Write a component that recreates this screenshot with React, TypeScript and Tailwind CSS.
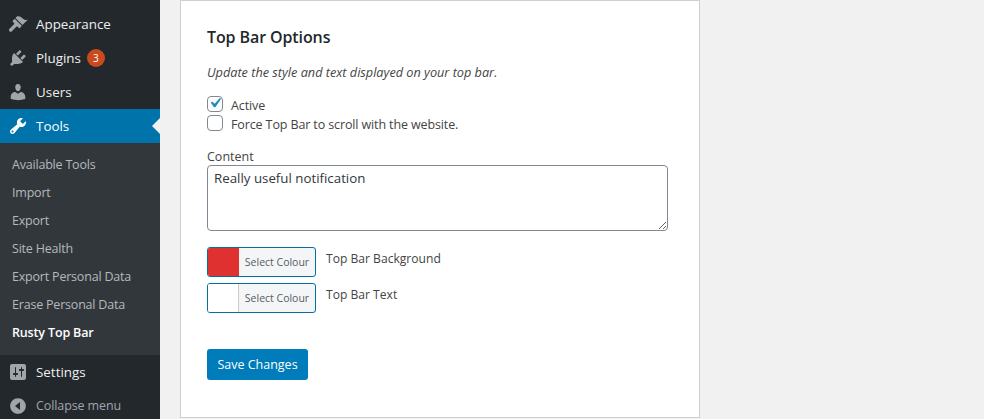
const icons: Record<string, string> = {
  appearance:
    "M14.48 11.06L7.41 3.99l1.5-1.5c.5-.56 2.3-.47 3.51.32 1.21.8 1.43 1.28 2.91 2.1 1.18.64 2.45 1.26 4.45.85zm-.71.71L6.7 4.7 4.93 6.47c-.39.39-.39 1.02 0 1.41l1.06 1.06c.39.39.39 1.03 0 1.42L1.5 14.8c-.7.7-.7 1.7 0 2.4s1.7.7 2.4 0l4.4-4.4c.39-.39 1.03-.39 1.42 0l1.06 1.06c.39.39 1.02.39 1.41 0z",
  plugins:
    "M13.11 4.36L9.87 7.6 8 5.73l3.24-3.24c.35-.34 1.05-.2 1.56.32.52.51.66 1.21.31 1.55zm-8 1.77l.91-1.12 9.01 9.01-1.19.84c-.71.71-2.63 1.16-3.82 1.16H6.14L4.9 17.26c-.59.59-1.54.59-2.12 0-.59-.58-.59-1.53 0-2.12l1.24-1.24v-3.88c0-1.13.4-3.19 1.09-3.89zm7.26 3.97l3.24-3.24c.34-.35 1.04-.21 1.55.31.52.51.66 1.21.31 1.55l-3.24 3.25z",
  users:
    "M10 9.25c-2.27 0-2.73-3.44-2.73-3.44C7 4.02 7.82 2 9.97 2c2.16 0 2.98 2.02 2.71 3.81 0 0-.41 3.44-2.68 3.44zm0 2.57L12.72 10c2.39 0 4.52 2.33 4.52 4.53v2.49s-3.65 1.13-7.24 1.13c-3.65 0-7.24-1.13-7.24-1.13v-2.49c0-2.25 1.94-4.48 4.47-4.48z",
  tools:
    "M16.68 9.77c-1.34 1.34-3.3 1.67-4.95.99l-5.41 6.52c-.99.99-2.59.99-3.58 0s-.99-2.59 0-3.57l6.52-5.42c-.68-1.65-.35-3.61.99-4.95 1.28-1.28 3.12-1.62 4.72-1.06l-2.89 2.89 2.82 2.82 2.86-2.87c.53 1.58.18 3.39-1.08 4.65zM3.81 16.21c.4.39 1.04.39 1.43 0 .4-.4.4-1.04 0-1.43-.39-.4-1.03-.4-1.43 0-.39.39-.39 1.03 0 1.43z",
  settings:
    "M18 16V4c0-1.1-.9-2-2-2H4c-1.1 0-2 .9-2 2v12c0 1.1.9 2 2 2h12c1.1 0 2-.9 2-2zM8 11h1c.55 0 1 .45 1 1s-.45 1-1 1H8v1.5c0 .28-.22.5-.5.5s-.5-.22-.5-.5V13H6c-.55 0-1-.45-1-1s.45-1 1-1h1V5.5c0-.28.22-.5.5-.5s.5.22.5.5V11zm5-2h-1c-.55 0-1-.45-1-1s.45-1 1-1h1V5.5c0-.28.22-.5.5-.5s.5.22.5.5V7h1c.55 0 1 .45 1 1s-.45 1-1 1h-1v5.5c0 .28-.22.5-.5.5s-.5-.22-.5-.5V9z",
  collapse:
    "M10 2.16c4.33 0 7.84 3.51 7.84 7.84s-3.51 7.84-7.84 7.84S2.16 14.33 2.16 10 5.71 2.16 10 2.16zm2 11.84V6l-5 4z",
};

const submenu = [
  "Available Tools",
  "Import",
  "Export",
  "Site Health",
  "Export Personal Data",
  "Erase Personal Data",
];

function MenuIcon({ name, className }: { name: string; className: string }) {
  return (
    <svg viewBox="0 0 20 20" className={`w-5 h-5 fill-current ${className}`}>
      <path d={icons[name]} />
    </svg>
  );
}

function MenuItem({ icon, label, children }: { icon: string; label: string; children?: React.ReactNode }) {
  return (
    <div className="h-[34px] flex items-center pl-2 text-[13.4px] leading-[32px] pb-px text-[#eeeeee]">
      <MenuIcon name={icon} className="text-[#a0a5aa] mr-2" />
      <span>{label}</span>
      {children}
    </div>
  );
}

function ColourRow({ swatch, divider, label }: { swatch: string; divider: string; label: string }) {
  return (
    <div className="flex items-start">
      <div className="w-[109px] h-[30px] flex border border-[#0071a1] rounded-[3px] overflow-hidden bg-[#f3f5f6]">
        <div className={`w-[31px] h-full border-r ${swatch} ${divider}`} />
        <div className="flex-1 text-center text-[10.5px] leading-[28px] text-[#555d66]">Select Colour</div>
      </div>
      <span className="ml-[10px] text-[12.1px] leading-[24px] text-[#444444]">{label}</span>
    </div>
  );
}

export default function App() {
  return (
    <div className="w-[984px] h-[419px] overflow-hidden flex bg-[#f1f1f1] font-['Open_Sans','Liberation_Sans',sans-serif]">
      <aside className="w-40 h-full shrink-0 bg-[#23282d] pt-[7px]">
        <MenuItem icon="appearance" label="Appearance" />
        <MenuItem icon="plugins" label="Plugins">
          <span className="ml-[6px] w-[18px] h-[18px] rounded-full bg-[#ca4a1f] text-white text-[10px] leading-[18px] text-center">3</span>
        </MenuItem>
        <MenuItem icon="users" label="Users" />
        <div className="relative h-[34px] flex items-center pl-2 bg-[#0073aa] text-[13.4px] text-white">
          <MenuIcon name="tools" className="text-white mr-2" />
          <span>Tools</span>
          <div className="absolute right-0 top-[9px] border-y-8 border-r-8 border-y-transparent border-r-[#f1f1f1]" />
        </div>
        <div className="bg-[#32373c] h-[212px] pt-2">
          {submenu.map((item) => (
            <div key={item} className="h-7 pl-3 text-[12.5px] tracking-[-0.2px] leading-7 text-[#b4b9be]">
              {item}
            </div>
          ))}
          <div className="h-7 pl-3 text-[12.5px] tracking-[-0.15px] leading-7 font-semibold text-white">Rusty Top Bar</div>
        </div>
        <MenuItem icon="settings" label="Settings" />
        <div className="h-[30px] flex items-center pl-2 pt-1 text-[12.5px] tracking-[-0.1px] text-[#a0a5aa]">
          <MenuIcon name="collapse" className="text-[#a0a5aa] mr-2" />
          <span>Collapse menu</span>
        </div>
      </aside>
      <main className="flex-1 pl-5">
        <div className="w-[520px] h-[418px] bg-white border border-[#ccd0d4] pl-[26px] text-[#444444]">
          <h2 className="mt-[24px] text-[16px] tracking-[-0.1px] leading-6 font-semibold text-[#23282d]">Top Bar Options</h2>
          <p className="mt-[13px] text-[12.7px] leading-[20px] italic">Update the style and text displayed on your top bar.</p>
          <label className="mt-[14px] flex items-start h-[19px] text-[12.5px] tracking-[-0.12px] leading-[19px]">
            <span className="relative w-4 h-4 mr-[8px] flex">
              <input type="checkbox" defaultChecked className="appearance-none w-4 h-4 rounded-[4px] border border-[#7e8993] bg-white" />
              <svg viewBox="0 0 20 20" className="absolute -left-[2px] -top-[3px] w-5 h-5 fill-[#1e8cbe]">
                <path d="M14.83 4.89l1.34.94-5.81 8.38H9.02L5.78 9.67l1.34-1.25 2.57 2.4z" />
              </svg>
            </span>
            Active
          </label>
          <label className="flex items-start h-[19px] text-[12.5px] tracking-[-0.12px] leading-[19px]">
            <input type="checkbox" className="appearance-none w-4 h-4 mr-[8px] rounded-[4px] border border-[#7e8993] bg-white" />
            Force Top Bar to scroll with the website.
          </label>
          <div className="mt-[14px] text-[12.5px] leading-[17px]">Content</div>
          <textarea
            defaultValue="Really useful notification"
            className="block w-[461px] h-[66px] resize-y px-[6px] py-[2px] rounded-[4px] border border-[#7e8993] bg-white text-[13.3px] leading-[20px] text-[#32373c] outline-none"
          />
          <div className="mt-4 flex flex-col gap-[6px]">
            <ColourRow swatch="bg-[#e03131]" divider="border-[#e03131]" label="Top Bar Background" />
            <ColourRow swatch="bg-white" divider="border-[#cccccc]" label="Top Bar Text" />
          </div>
          <button className="mt-9 w-[101px] h-[31px] pt-px rounded-[3px] bg-[#007cba] text-white text-[12.5px]">Save Changes</button>
        </div>
      </main>
    </div>
  );
}
